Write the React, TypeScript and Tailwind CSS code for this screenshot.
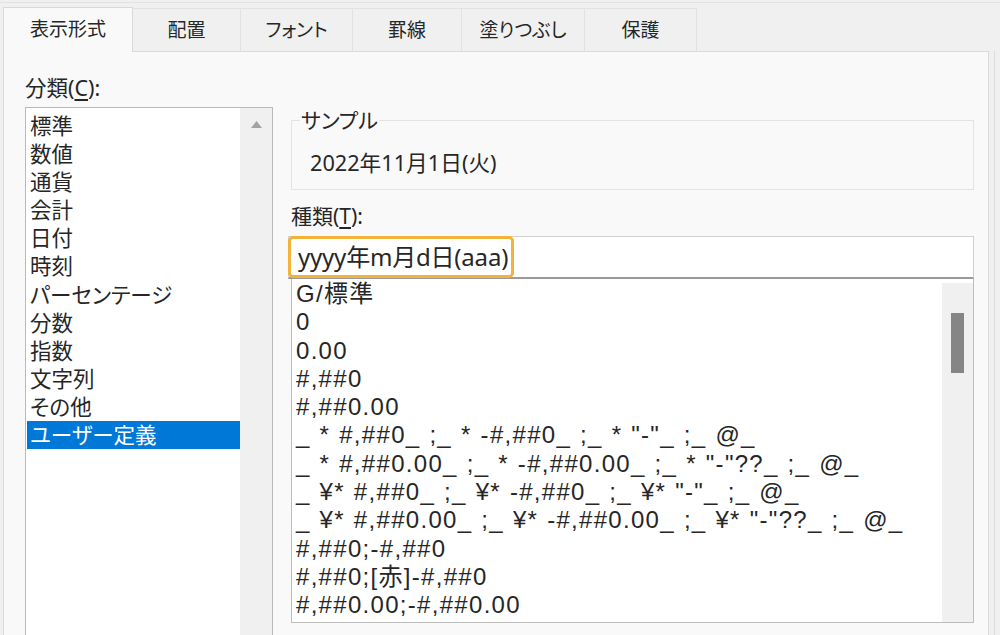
const tabs = [
  { label: "表示形式", w: "w-[130px]", active: true },
  { label: "配置", w: "w-[108px]" },
  { label: "フォント", w: "w-[112px]" },
  { label: "罫線", w: "w-[109px]" },
  { label: "塗りつぶし", w: "w-[123px]" },
  { label: "保護", w: "w-[112px]" },
];

const categories = [
  "標準",
  "数値",
  "通貨",
  "会計",
  "日付",
  "時刻",
  "パーセンテージ",
  "分数",
  "指数",
  "文字列",
  "その他",
  "ユーザー定義",
];

const formats = [
  "G/標準",
  "0",
  "0.00",
  "#,##0",
  "#,##0.00",
  '_ * #,##0_ ;_ * -#,##0_ ;_ * "-"_ ;_ @_',
  '_ * #,##0.00_ ;_ * -#,##0.00_ ;_ * "-"??_ ;_ @_',
  '_ ¥* #,##0_ ;_ ¥* -#,##0_ ;_ ¥* "-"_ ;_ @_',
  '_ ¥* #,##0.00_ ;_ ¥* -#,##0.00_ ;_ ¥* "-"??_ ;_ @_',
  "#,##0;-#,##0",
  "#,##0;[赤]-#,##0",
  "#,##0.00;-#,##0.00",
];

export default function App() {
  return (
    <div className="w-[1000px] h-[635px] overflow-hidden bg-[#f0f0f0] text-[#262626] text-[21px] font-['Noto_Sans','Noto_Sans_CJK_JP',sans-serif] [font-feature-settings:'palt'] border-t-[2px] border-[#f0f0f0]">
      <div className="border-t border-[#e2e2e2]" />
      {/* tabs */}
      <div className="flex items-end h-[48px] pl-[3px] text-[19px]">
        {tabs.map((t) =>
          t.active ? (
            <div
              key={t.label}
              className={`${t.w} h-[45px] -mb-px z-10 bg-[#f9f9f9] border border-b-0 border-[#dadada] flex items-center justify-center pb-[1px]`}
            >
              {t.label}
            </div>
          ) : (
            <div
              key={t.label}
              className={`${t.w} h-[43px] bg-[#f0f0f0] border border-b-0 border-l-0 border-[#e2e2e2] flex items-center justify-center`}
            >
              {t.label}
            </div>
          )
        )}
      </div>

      {/* panel */}
      <div className="flex">
        <div className="ml-[3px] w-[986px] h-[600px] bg-[#f9f9f9] border border-[#dadada] flex pt-[22px]">
          {/* left column */}
          <div className="pl-[21px] w-[284px] flex flex-col">
            <div className="leading-[28px] h-[28px] text-[21.5px]">
              分類(<span className="underline underline-offset-[3px]">C</span>):
            </div>
            <div className="mt-[5px] w-[248px] h-[540px] bg-white border border-[#b9b9b9] flex">
              <div className="flex-1 pt-[4px] pl-px text-[21.5px]">
                {categories.map((c) => (
                  <div
                    key={c}
                    className={`h-[28.1px] leading-[28.1px] pl-[3px] whitespace-nowrap ${
                      c === "ユーザー定義" ? "bg-[#0078d7] text-white" : ""
                    }`}
                  >
                    {c}
                  </div>
                ))}
              </div>
              <div className="w-[32px] bg-[#f0f0f0] flex justify-center pt-[13px]">
                <svg width="11" height="7" viewBox="0 0 11 7">
                  <path d="M0 7 L5.5 0 L11 7 Z" fill="#a3a3a3" />
                </svg>
              </div>
            </div>
          </div>

          {/* right column */}
          <div className="w-[686px] flex flex-col">
            <fieldset className="ml-[3px] mt-[35px] h-[81px] border border-[#e3e3e3] px-[9px]">
              <legend className="leading-[22px] px-px -ml-px">サンプル</legend>
              <div className="leading-[28px] pl-[9px] mt-[18px] text-[21.7px]">2022年11月1日(火)</div>
            </fieldset>
            <div className="mt-[12px] ml-[3px] leading-[28px]">
              種類(<span className="underline underline-offset-[3px]">T</span>):
            </div>
            <div className="mt-[6px] h-[43px] bg-white border border-[#d0d0d0] border-b-2 border-b-[#9a9a9a] flex items-stretch">
              <span className="inline-flex items-center h-[42px] -mt-px -ml-px pl-[7px] pr-[3px] border-[3px] border-[#f3b23a] rounded-[5px] text-[24px] tracking-[-0.2px]">
                yyyy年m月d日(aaa)
              </span>
            </div>
            <div className="ml-[3px] h-[344px] bg-white border border-[#bdbdbd] border-t-0 flex">
              <div className="flex-1 pt-[1px] pl-[4px] text-[24px] font-['Liberation_Sans','Noto_Sans_CJK_JP',sans-serif] tracking-[1.3px] [word-spacing:1px]">
                {formats.map((f) => (
                  <div key={f} className="h-[28.3px] leading-[28.3px] whitespace-pre">
                    {f}
                  </div>
                ))}
              </div>
              <div className="w-[31px] mt-[4px] bg-[#f0f0f0] flex justify-center pt-[30px]">
                <div className="w-[13px] h-[60px] bg-[#858585]" />
              </div>
            </div>
          </div>
        </div>
        <div className="ml-[5px] w-px h-[600px] bg-[#dcdcdc]" />
      </div>
    </div>
  );
}
